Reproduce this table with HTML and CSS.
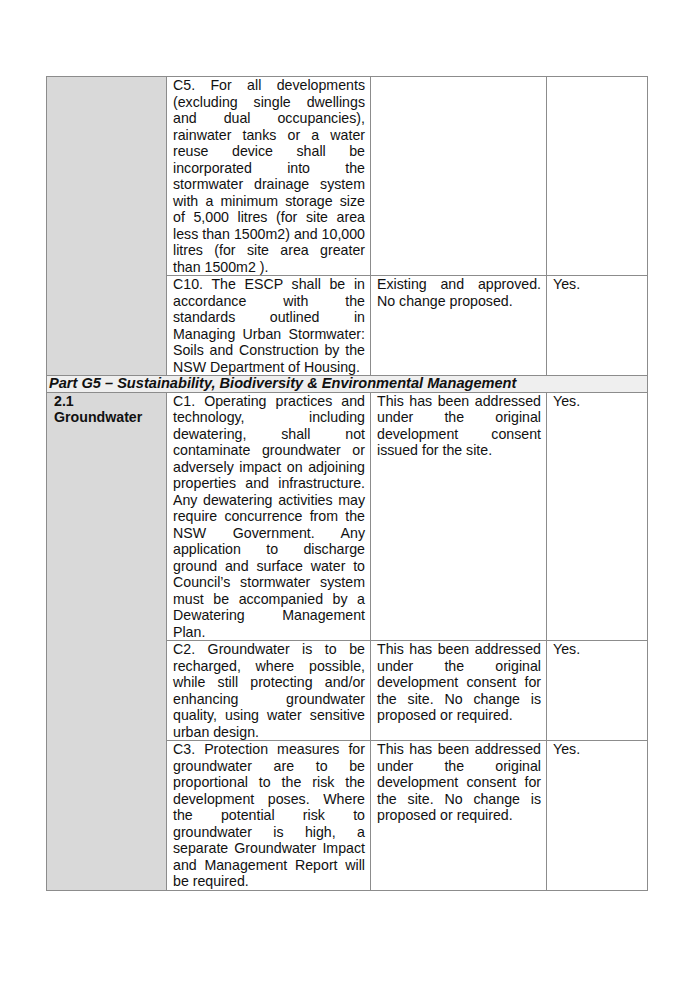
FILE: index.html
```html
<!DOCTYPE html>
<html>
<head>
<meta charset="utf-8">
<link rel="stylesheet" href="styles.css">
</head>
<body>
<div class="page">
<table class="grid">
  <colgroup>
    <col class="c1"><col class="c2"><col class="c3"><col class="c4">
  </colgroup>
  <tr>
    <td class="label" rowspan="2"></td>
    <td>C5. For all developments (excluding single dwellings and dual occupancies), rainwater tanks or a water reuse device shall be incorporated into the stormwater drainage system with a minimum storage size of 5,000 litres (for site area less than 1500m2) and 10,000 litres (for site area greater than 1500m2 ).</td>
    <td></td>
    <td></td>
  </tr>
  <tr>
    <td>C10. The ESCP shall be in accordance with the standards outlined in Managing Urban Stormwater: Soils and Construction by the NSW Department of Housing.</td>
    <td>Existing and approved. No change proposed.</td>
    <td>Yes.</td>
  </tr>
  <tr class="section">
    <td colspan="4">Part G5 – Sustainability, Biodiversity &amp; Environmental Management</td>
  </tr>
  <tr>
    <td class="label" rowspan="3"><b>2.1<br>Groundwater</b></td>
    <td>C1. Operating practices and technology, including dewatering, shall not contaminate groundwater or adversely impact on adjoining properties and infrastructure. Any dewatering activities may require concurrence from the NSW Government. Any application to discharge ground and surface water to Council’s stormwater system must be accompanied by a Dewatering Management Plan.</td>
    <td>This has been addressed under the original development consent issued for the site.</td>
    <td>Yes.</td>
  </tr>
  <tr>
    <td>C2. Groundwater is to be recharged, where possible, while still protecting and/or enhancing groundwater quality, using water sensitive urban design.</td>
    <td>This has been addressed under the original development consent for the site. No change is proposed or required.</td>
    <td>Yes.</td>
  </tr>
  <tr>
    <td>C3. Protection measures for groundwater are to be proportional to the risk the development poses. Where the potential risk to groundwater is high, a separate Groundwater Impact and Management Report will be required.</td>
    <td>This has been addressed under the original development consent for the site. No change is proposed or required.</td>
    <td>Yes.</td>
  </tr>
</table>
</div>
</body>
</html>
```

FILE: styles.css
```css
html, body {
  margin: 0;
  padding: 0;
  background: #ffffff;
}
.page {
  padding: 76px 0 0 46px;
  width: 694px;
  height: 989px;
  box-sizing: border-box;
}
.grid {
  border-collapse: collapse;
  table-layout: fixed;
  width: 601px;
  font-family: "Liberation Sans", Arial, sans-serif;
  font-size: 14.2px;
  line-height: 16.5px;
  color: #111111;
}
.c1 { width: 120px; }
.c2 { width: 204px; }
.c3 { width: 176px; }
.c4 { width: 101px; }
.grid td {
  border: 1px solid #8c8c8c;
  vertical-align: top;
  padding: 0 5px 0 6px;
  text-align: justify;
}
.grid td.label {
  background: #d9d9d9;
  text-align: left;
  padding-left: 7px;
}
.section td {
  background: #efefef;
  font-weight: bold;
  font-style: italic;
  font-size: 14.6px;
  line-height: 15.5px;
  text-align: left;
  padding-left: 2px;
}
```
